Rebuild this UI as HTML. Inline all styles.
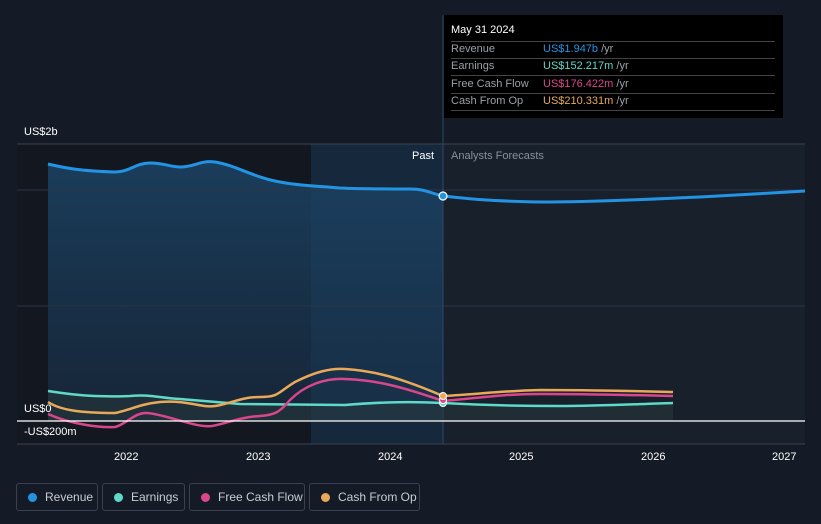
<!DOCTYPE html><html><head><style>
body{margin:0;width:821px;height:524px;background:#151b26;font-family:"Liberation Sans",sans-serif;overflow:hidden;position:relative}
.t{position:absolute;font-size:11px;color:#fff}
.leg{position:absolute;top:483px;height:28px;border:1px solid #3a414c;border-radius:3px;box-sizing:border-box;color:#c9ccd1;font-size:12px;line-height:26px;padding-left:28px}
.leg i{position:absolute;left:11px;top:9px;width:9px;height:9px;border-radius:50%}
</style></head><body>
<svg width="821" height="524" style="position:absolute;left:0;top:0">
<defs><linearGradient id="g" x1="0" y1="0" x2="0" y2="1"><stop offset="0" stop-color="#1b4466" stop-opacity=".85"/><stop offset="1" stop-color="#1b3550" stop-opacity=".5"/></linearGradient></defs>
<rect x="17" y="144" width="294" height="300" fill="#121720"/>
<rect x="311" y="144" width="132" height="300" fill="#15283c"/>
<rect x="443" y="144" width="362" height="300" fill="#18202c"/>
<path d="M48,164 C65,168 80,171 115,172 C130,172 135,163 150,163 C165,163 170,167 180,167 C195,167 200,160 215,162 C235,165 255,178 280,182 C300,186 320,186 340,188 C360,189 380,189 410,189 C425,189 430,193 443,196 L443,421 L48,421Z" fill="url(#g)"/>
<line x1="17" y1="144" x2="805" y2="144" stroke="#3a4250"/>
<line x1="17" y1="190" x2="805" y2="190" stroke="#2c3646"/>
<line x1="17" y1="306" x2="805" y2="306" stroke="#2c3646"/>
<line x1="17" y1="444" x2="805" y2="444" stroke="#3a4250"/>
<line x1="443" y1="15" x2="443" y2="444" stroke="#2c4a66"/>
<path d="M48,391 C80,396 100,397 130,396 C150,394 160,398 180,399 L240,404 L345,405 C370,403 400,401 443,403 C480,405 520,406 560,406 C600,406 640,404 673,403 L673,421 L48,421Z" fill="#2a3a3c" opacity=".5"/>
<path d="M48,391 C80,396 100,397 130,396 C150,394 160,398 180,399 L240,404 L345,405 C370,403 400,401 443,403 C480,405 520,406 560,406 C600,406 640,404 673,403" stroke="#5fd9c8" stroke-width="2.5" fill="none"/>
<path d="M48,414 C70,424 100,428 115,427 C125,425 135,412 147,413 C165,414 195,428 212,426 C225,424 240,417 260,416 C275,415 280,412 290,400 C305,385 325,378 345,379 C375,380 400,386 443,401 C480,398 500,394 540,394 C580,394 630,395 673,396" stroke="#d9468c" stroke-width="2.5" fill="none"/>
<path d="M48,402 C60,410 80,413 115,413 C130,410 140,404 160,402 C190,400 200,408 215,406 C230,404 240,397 260,397 C280,397 278,392 295,382 C315,372 330,368 345,369 C380,371 410,382 443,396 C480,394 500,391 540,390 C590,390 630,391 673,392" stroke="#e8a95a" stroke-width="2.5" fill="none"/>
<path d="M48,164 C65,168 80,171 115,172 C130,172 135,163 150,163 C165,163 170,167 180,167 C195,167 200,160 215,162 C235,165 255,178 280,182 C300,186 320,186 340,188 C360,189 380,189 410,189 C425,189 430,193 443,196 C470,199 490,201 540,202 C600,202 650,199 700,197 C740,195 770,193 805,191" stroke="#2394e4" stroke-width="3" fill="none"/>
<line x1="17" y1="421" x2="805" y2="421" stroke="#fff" stroke-width="1.2"/>
<circle cx="443" cy="196" r="4" fill="#2394e4" stroke="#fff" stroke-width="1.2"/>
<circle cx="443" cy="403" r="3.5" fill="#5fd9c8" stroke="#fff"/>
<circle cx="443" cy="400" r="3.5" fill="#d9468c" stroke="#fff"/>
<circle cx="443" cy="396" r="3.5" fill="#e8a95a" stroke="#fff"/>
</svg>
<div style="position:absolute;left:444px;top:15px;width:339px;height:103px;background:#000"></div>
<div class="t" style="left:451px;top:24px;font-size:11px">May 31 2024</div>
<div style="position:absolute;left:451px;top:41px;width:324px;border-top:1px solid #444"></div>
<div style="position:absolute;left:451px;top:58px;width:324px;border-top:1px solid #444"></div>
<div style="position:absolute;left:451px;top:75px;width:324px;border-top:1px solid #444"></div>
<div style="position:absolute;left:451px;top:93px;width:324px;border-top:1px solid #444"></div>
<div style="position:absolute;left:451px;top:110px;width:324px;border-top:1px solid #444"></div>
<div class="t" style="left:451px;top:43px;color:#9aa0a8">Revenue</div><div class="t" style="left:543px;top:43px;color:#2394e4">US$1.947b <span style="color:#9aa0a8">/yr</span></div>
<div class="t" style="left:451px;top:60px;color:#9aa0a8">Earnings</div><div class="t" style="left:543px;top:60px;color:#5fd9c8">US$152.217m <span style="color:#9aa0a8">/yr</span></div>
<div class="t" style="left:451px;top:78px;color:#9aa0a8">Free Cash Flow</div><div class="t" style="left:543px;top:78px;color:#d9468c">US$176.422m <span style="color:#9aa0a8">/yr</span></div>
<div class="t" style="left:451px;top:95px;color:#9aa0a8">Cash From Op</div><div class="t" style="left:543px;top:95px;color:#e8a95a">US$210.331m <span style="color:#9aa0a8">/yr</span></div>
<div class="t" style="left:24px;top:126px">US$2b</div>
<div class="t" style="left:412px;top:150px">Past</div>
<div class="t" style="left:451px;top:150px;color:#8a9099">Analysts Forecasts</div>
<div class="t" style="left:24px;top:403px">US$0</div>
<div class="t" style="left:24px;top:426px">-US$200m</div>
<div class="t" style="left:114px;top:451px">2022</div>
<div class="t" style="left:246px;top:451px">2023</div>
<div class="t" style="left:378px;top:451px">2024</div>
<div class="t" style="left:509px;top:451px">2025</div>
<div class="t" style="left:641px;top:451px">2026</div>
<div class="t" style="left:772px;top:451px">2027</div>
<div class="leg" style="left:16px;width:82px"><i style="background:#2394e4"></i>Revenue</div>
<div class="leg" style="left:102px;width:83px"><i style="background:#5fd9c8"></i>Earnings</div>
<div class="leg" style="left:189px;width:116px"><i style="background:#d9468c"></i>Free Cash Flow</div>
<div class="leg" style="left:309px;width:111px"><i style="background:#e8a95a"></i>Cash From Op</div>
</body></html>
